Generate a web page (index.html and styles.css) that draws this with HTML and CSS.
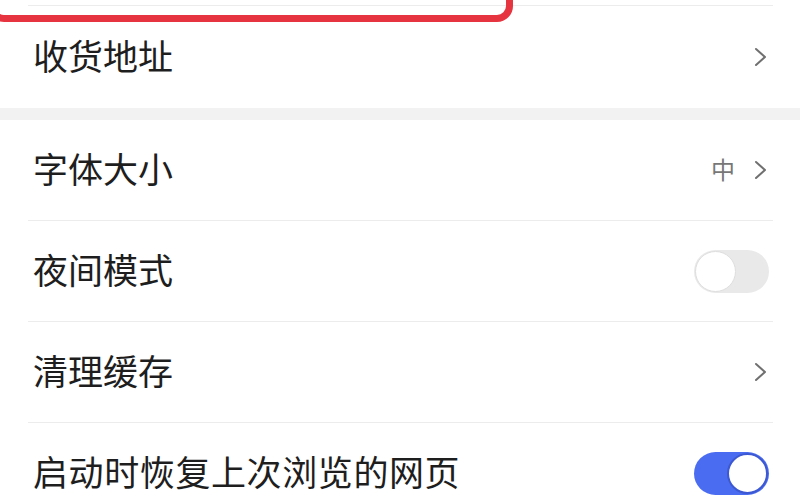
FILE: index.html
```html
<!DOCTYPE html>
<html lang="zh-CN">
<head>
<meta charset="utf-8">
<title>设置</title>
<link rel="stylesheet" href="styles.css">
</head>
<body>
<div class="screen">
  <div class="highlight"></div>
  <div class="cut-row"></div>
  <div class="divider"></div>
  <div class="row row-top">
    <span class="label">收货地址</span>
    <svg class="chev" width="13" height="20" viewBox="0 0 13 20"><polyline points="2,2 11,10 2,18" fill="none" stroke="#707070" stroke-width="2" stroke-linecap="round" stroke-linejoin="round"/></svg>
  </div>
  <div class="band"></div>
  <div class="row">
    <span class="label">字体大小</span>
    <span class="trail"><span class="value">中</span><svg class="chev" width="13" height="20" viewBox="0 0 13 20"><polyline points="2,2 11,10 2,18" fill="none" stroke="#707070" stroke-width="2" stroke-linecap="round" stroke-linejoin="round"/></svg></span>
  </div>
  <div class="divider"></div>
  <div class="row">
    <span class="label">夜间模式</span>
    <span class="toggle"><span class="knob"></span></span>
  </div>
  <div class="divider"></div>
  <div class="row">
    <span class="label">清理缓存</span>
    <svg class="chev" width="13" height="20" viewBox="0 0 13 20"><polyline points="2,2 11,10 2,18" fill="none" stroke="#707070" stroke-width="2" stroke-linecap="round" stroke-linejoin="round"/></svg>
  </div>
  <div class="divider"></div>
  <div class="row">
    <span class="label label-wide">启动时恢复上次浏览的网页</span>
    <span class="toggle toggle-on"><span class="knob"></span></span>
  </div>
</div>
</body>
</html>
```

FILE: styles.css
```css
html, body {
  margin: 0;
  padding: 0;
  background: #ffffff;
  overflow: hidden;
}

body {
  font-family: "Noto Sans CJK SC", "Noto Sans", sans-serif;
  color: #1e1e1e;
}

.screen {
  position: relative;
  width: 800px;
  height: 500px;
  overflow: hidden;
}

.highlight {
  position: absolute;
  left: -12px;
  top: -40px;
  width: 511px;
  height: 48px;
  border: 7px solid #e63540;
  border-radius: 16px;
  z-index: 2;
}

.cut-row {
  height: 5px;
}

.divider {
  height: 1px;
  background: #ececec;
  margin: 0 27px 0 28px;
}

.row {
  display: flex;
  align-items: center;
  justify-content: space-between;
  height: 100px;
  padding: 0 31px 0 33px;
}

.row-top {
  height: 102px;
}

.label {
  font-size: 35px;
  line-height: 1;
  margin-bottom: 5px;
}

.label-wide {
  letter-spacing: 0.6px;
}

.band {
  height: 12px;
  background: #f2f2f2;
}

.chev {
  display: block;
  margin-right: 2px;
}

.trail {
  display: flex;
  align-items: center;
  gap: 19px;
}

.value {
  font-size: 24px;
  line-height: 1;
  color: #777777;
  margin-bottom: 3px;
}

.toggle {
  display: flex;
  align-items: center;
  box-sizing: border-box;
  width: 75px;
  height: 43px;
  border-radius: 22px;
  background: #e9e9e9;
  padding: 1px;
}

.knob {
  box-sizing: border-box;
  width: 41px;
  height: 41px;
  border-radius: 50%;
  background: #ffffff;
  border: 1px solid #dedede;
}

.toggle-on {
  background: #4a6cf0;
  justify-content: flex-end;
}

.toggle-on .knob {
  border: 2px solid #3c58d2;
}
```
